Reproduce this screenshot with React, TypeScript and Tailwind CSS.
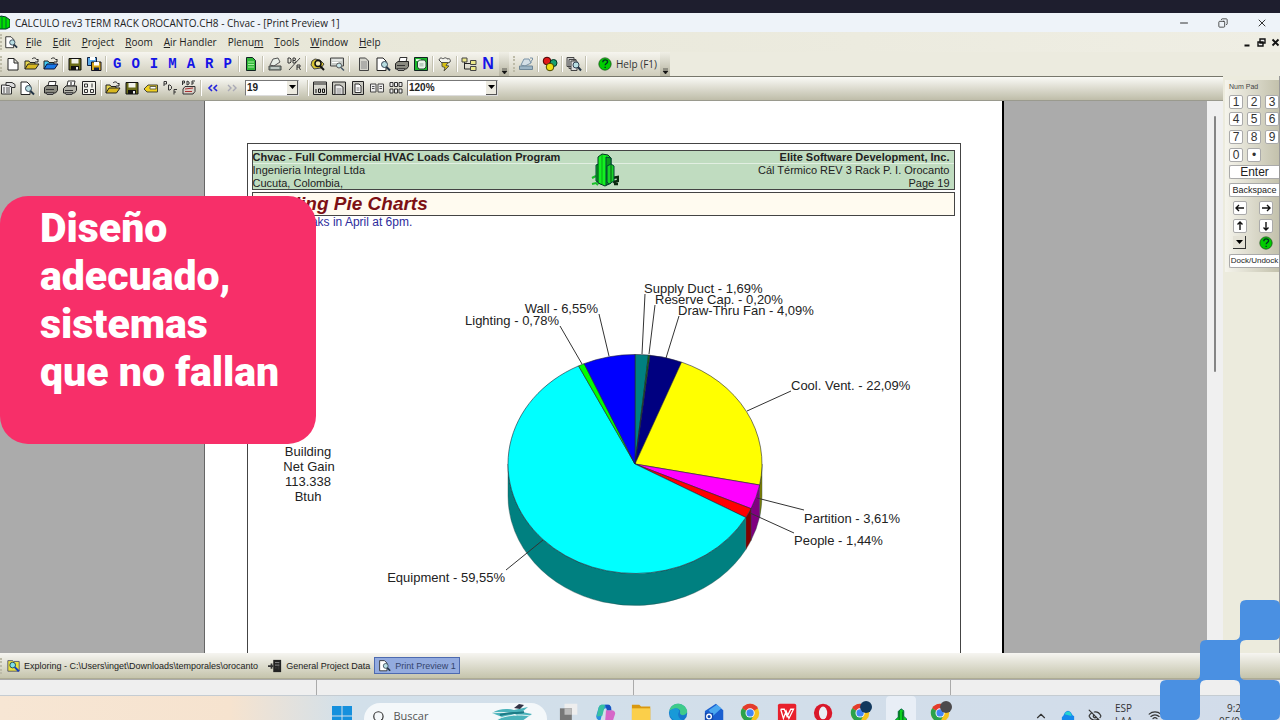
import type { ReactNode } from 'react';
import { Search, ChevronUp, Wifi, EyeOff, Minus, X, Copy } from 'lucide-react';

type IconProps = { children: ReactNode; size?: string; box?: string };

function Icon({ children, size = 'w-4 h-4', box = '0 0 16 16' }: IconProps) {
  return (
    <svg viewBox={box} className={`${size} shrink-0`} aria-hidden="true">
      {children}
    </svg>
  );
}

const ink = '#222';

const icons: Record<string, ReactNode> = {
  new: <path d="M3 2.5h6l4 4V14H3zM9 2.5V7h4" fill="#fff" stroke={ink} />,
  open: (
    <>
      <path d="M1 13V5h4l1 1.500h5V9" fill="#e8d850" stroke={ink} />
      <path d="M1 13l3-5h11l-3.500 5z" fill="#d8b820" stroke={ink} />
      <path d="M8 3c2-2 4-1 5 1l1-1v3h-3" fill="none" stroke={ink} />
    </>
  ),
  openBlue: (
    <>
      <path d="M1 13V5h4l1 1.500h5V9" fill="#40c8f0" stroke={ink} />
      <path d="M1 13l3-5h11l-3.500 5z" fill="#1878e8" stroke="#113" />
      <path d="M8 3c2-2 4-1 5 1l1-1v3h-3" fill="none" stroke={ink} />
    </>
  ),
  save: (
    <>
      <path d="M2 2.500h12V14H2z" fill="#6b6c18" stroke="#111" />
      <path d="M4.500 3h7v4.500h-7z" fill="#f2f2ea" />
      <path d="M4 10h8v4H4z" fill="#111" />
      <path d="M9 11h2v2.500H9z" fill="#eee" />
    </>
  ),
  saveAll: (
    <>
      <path d="M1.500 1.500h9v8h-9z" fill="#59a8e8" stroke="#124" />
      <path d="M4 1h5v3H4z" fill="#fff" />
      <path d="M5.500 6h9.500v8.500H5.500z" fill="#d8a818" stroke="#112" />
      <path d="M8 6h5v3.500H8z" fill="#fff" />
      <path d="M8 11.500h5V14H8z" fill="#124" />
    </>
  ),
  greenDoc: (
    <>
      <path d="M3.500 1.500h6l3 3V14.500h-9z" fill="#30b838" stroke="#122" />
      <path d="M5 6h6M5 8.500h6M5 11h6" stroke="#a8f0a0" />
    </>
  ),
  scale: (
    <>
      <path d="M3 9l3-6 5-1 2 4-6 4z" fill="#e8efe8" stroke="#555" />
      <path d="M2 10h12v4H2z" fill="#8fa39a" stroke="#444" />
      <path d="M4 12h8" stroke="#eee" />
    </>
  ),
  dbr: (
    <>
      <path d="M3 14L14 2" stroke="#444" />
      <path d="M2 2v5M2 2h2l1 1v3l-1 1H2M7 2v5M7 2h2l.5 1L9 4.500H7M9 4.500l1 1V6L9 7H7" fill="none" stroke="#333" />
      <path d="M11 9v5M11 9h3v2h-3M13 11l1.500 3" fill="none" stroke="#333" />
    </>
  ),
  find: (
    <>
      <path d="M2 5l3-2 5 1 4 4-3 4-7 1-3-4z" fill="#d8c430" stroke="#444" />
      <circle cx="8" cy="7.500" r="3" fill="#f4ecb0" stroke="#111" strokeWidth="1.500" />
      <path d="M10 10l4 4" stroke="#111" strokeWidth="2" />
    </>
  ),
  screen: (
    <>
      <path d="M1.500 2h13v8h-13z" fill="#c8ccc8" stroke="#444" />
      <path d="M3 4h10M3 6.500h7" stroke="#fff" />
      <circle cx="10" cy="9.500" r="2.500" fill="#c7e6ea" stroke="#555" />
      <path d="M12 11.500l3 3" stroke="#456" strokeWidth="1.500" />
    </>
  ),
  doc: (
    <>
      <path d="M3.500 2h6l3 3v9.500h-9z" fill="#d4d4cc" stroke="#444" />
      <path d="M5 6h6M5 8h6M5 10h6M5 12h6" stroke="#888" />
    </>
  ),
  preview: (
    <>
      <path d="M2 2h6l3 3v9.500H2z" fill="#fff" stroke={ink} />
      <circle cx="9.500" cy="8.500" r="3" fill="#b8dee2" stroke="#345" />
      <path d="M11.500 11l3.500 3.500" stroke="#234" strokeWidth="2" />
    </>
  ),
  previews: (
    <>
      <path d="M1 1.500h7v9H1zM3 3.500h7v9H3z" fill="#ccc" stroke="#444" />
      <path d="M5 5h6v9.500H5z" fill="#ddd" stroke="#444" />
      <circle cx="10" cy="9" r="3" fill="#b8dee2" stroke="#345" />
      <path d="M12 11l3 3.500" stroke="#234" strokeWidth="2" />
    </>
  ),
  print: (
    <>
      <path d="M5 6l1-4.500h7L12 6z" fill="#fff" stroke="#333" />
      <path d="M1.500 7.500L4 5.500h10.500v5l-2 2.500h-11z" fill="#8a8a80" stroke={ink} />
      <path d="M3 9.500h8M3 13h8l-1 1.500H4z" fill="#eee" stroke="#333" />
    </>
  ),
  printOne: (
    <>
      <path d="M5 6l1-5h7l-1 5z" fill="#fff" stroke="#333" />
      <path d="M9 2v3" stroke="#111" />
      <path d="M1.500 8.500L4 6h10.500v4.500l-2 2.500h-11z" fill="#b4b4aa" stroke={ink} />
      <path d="M3 10.500h8M3 13h8l-1 1.500H4z" fill="#eee" stroke="#333" />
    </>
  ),
  pages: (
    <>
      <path d="M1.500 1.500h13v13h-13z" fill="#f2f2ec" stroke="#222" />
      <path d="M3.500 4h3v3h-3zM3.500 9.500h3v3h-3z" fill="none" stroke="#333" />
      <path d="M11 3.500v4M9.500 9.500h3v3h-3z" fill="none" stroke="#333" />
    </>
  ),
  greenFrame: (
    <>
      <path d="M1.500 1.500h13v13h-13z" fill="#18b828" stroke="#122" />
      <path d="M3 3h5v2H3z" fill="#d8f8d8" />
      <path d="M4.500 6l2-2h5l1.500 2v5l-2 2H6l-1.500-2z" fill="#e8f4e8" stroke="#243" />
      <path d="M6.500 7h4v3.500h-4z" fill="#b8ccc0" />
    </>
  ),
  funnel: (
    <>
      <path d="M2 4c1-3 3-2 4-1 2-2 4-1 4 0 3-1 4 1 3 3l-4 2H6z" fill="#f4f4ee" stroke="#444" />
      <path d="M5 6.500h6l-2 3 3 .5-5 5 1-3.500-3-1z" fill="#d8c010" stroke="#554" />
    </>
  ),
  tree: (
    <>
      <path d="M3.500 5v8h6M3.500 7.500h6" fill="none" stroke="#222" />
      <path d="M1 2h5v4H1zM9.500 4.500H15v4H9.500zM9.500 10.500H15v4H9.500z" fill="#ece88a" stroke="#444" />
    </>
  ),
  paleScale: (
    <>
      <path d="M3 9l3-6h5l2 4-6 3z" fill="#d4dfe6" stroke="#7a93a6" />
      <path d="M1.500 10h13v3.500h-13z" fill="#9cb4c4" stroke="#6f8798" />
      <path d="M12 2h2.500v2L13 5v2" fill="none" stroke="#7a93a6" />
    </>
  ),
  balls: (
    <>
      <circle cx="5" cy="5" r="3.800" fill="#e01818" stroke="#400" />
      <circle cx="11.500" cy="7" r="3.500" fill="#18a070" stroke="#032" />
      <circle cx="8" cy="11" r="3.800" fill="#f0e010" stroke="#440" />
    </>
  ),
  form: (
    <>
      <path d="M1.500 5h10v9h-10z" fill="#eee" stroke="#333" />
      <path d="M3 8h2M6 8h4M3 10h2M6 10h4M3 12h2M6 12h4" stroke="#555" />
      <path d="M6 2.500h6l3 2v3h-3l-3-2H6z" fill="#ddd" stroke="#333" />
    </>
  ),
  label: (
    <>
      <path d="M1 9l4-4h9.500v7H4z" fill="#f0d020" stroke="#443" />
      <path d="M7 6.500h6V9H7z" fill="#fff" stroke="#664" />
    </>
  ),
  pdf: (
    <path d="M2 6V1.500h2.500V4H2M6.500 10V5h1.500l1.500 1.500v2L8 10zM12 14.500V9.500h3M12 12h2" fill="none" stroke="#333" />
  ),
  pdfPrint: (
    <>
      <path d="M1.500 5V1h2v2h-2M6 1v4l2-1V2zM11 5V1h3M11 3h2" fill="none" stroke="#333" />
      <path d="M2 9l2-2.500h10v5L12 14H2z" fill="#d8d0c8" stroke="#333" />
      <path d="M4 9l8-1M4 11.500h7" stroke="#a33" />
    </>
  ),
  zoom100: (
    <>
      <path d="M1.500 2h13v12.500h-13z" fill="#d8d8d0" stroke="#222" />
      <path d="M2 4h12" stroke="#222" />
      <path d="M4 9v4M6.500 9h2v3.500h-2zM10.500 9h2v3.500h-2z" fill="none" stroke="#111" />
    </>
  ),
  zoomWidth: (
    <>
      <path d="M1.500 2h13v12.500h-13z" fill="#c8c8c0" stroke="#222" />
      <path d="M4 5h5l3 2v7.500H4z" fill="#eee" stroke="#333" />
      <path d="M5.500 9h5M5.500 11h5M5.500 13h5" stroke="#888" />
    </>
  ),
  zoomPage: (
    <>
      <path d="M2.500 1.500h11v13h-11z" fill="#c8c8c0" stroke="#222" />
      <path d="M5 4h4l2 2v6.500H5z" fill="#fff" stroke="#333" />
      <path d="M6.500 8h3M6.500 10h3" stroke="#777" />
    </>
  ),
  twoPages: (
    <>
      <path d="M1.500 4h5.500v8H1.500zM9 4h5.500v8H9z" fill="#eee" stroke="#444" />
      <path d="M3 6.500h2.500M3 8.500h2.500M10.500 6.500H13M10.500 8.500H13" stroke="#555" />
    </>
  ),
  sixPages: (
    <path d="M2 2.500h3v4H2zM6.500 2.500h3v4h-3zM11 2.500h3v4h-3zM2 9h3v4H2zM6.500 9h3v4h-3zM11 9h3v4h-3z" fill="#eee" stroke="#333" />
  ),
};

function Building({ size }: { size: string }) {
  return (
    <Icon size={size} box="0 0 28 34">
      <path d="M1 25l4-2M1 31l4-1 2 2" stroke="#18c028" strokeWidth="2" fill="none" />
      <path d="M21 25l6-1v4l-5 1M23 31h4" stroke="#0c2a10" strokeWidth="2.500" fill="none" />
      <path d="M5 12l5-2v21l-5-3z" fill="#10b820" stroke="#043" />
      <path d="M7 4l4-3 6 1 3 3v25l-6 3-7-3z" fill="#12f020" stroke="#032" />
      <path d="M15 4l5 1v25l-5 2z" fill="#0a9a1c" stroke="#043" />
      <path d="M11 2v29" stroke="#0aa018" />
      <path d="M16 13l4-2 3 2v15l-5 3-2-2z" fill="#18d428" stroke="#043" />
      <path d="M20 12v17" stroke="#065a14" />
    </Icon>
  );
}

function ToolButton({ name, label }: { name: string; label: string }) {
  return (
    <button aria-label={label} className="shrink-0">
      <Icon>{icons[name]}</Icon>
    </button>
  );
}

function Sep() {
  return <span className="h-4 w-[2px] shrink-0 border-l border-[#c4c2b2] bg-white" />;
}

function Grip() {
  return <span className="h-4 w-[2px] shrink-0 border-l-2 border-dotted border-[#bdbba8]" />;
}

function More() {
  return (
    <button aria-label="More buttons" className="flex h-6 w-[10px] shrink-0 items-end justify-center bg-gradient-to-b from-[#f0efe6] to-[#b5b3a0] pb-px">
      <Icon size="w-[7px] h-[7px]" box="0 0 7 7">
        <path d="M1 1h5M1 3h5L3.500 6z" fill="#111" stroke="#111" strokeWidth=".6" />
      </Icon>
    </button>
  );
}

function HelpBall({ size }: { size: string }) {
  return (
    <Icon size={size}>
      <circle cx="8" cy="8" r="7" fill="#0c0" stroke="#175c17" />
      <path d="M5.500 6c0-3.500 5.500-3.500 5.500-.5 0 2-2.800 2-2.800 4M8.200 11v1.600" fill="none" stroke="#032" strokeWidth="1.500" />
    </Icon>
  );
}

const menus: [string, string, string][] = [
  ['', 'F', 'ile'],
  ['', 'E', 'dit'],
  ['', 'P', 'roject'],
  ['', 'R', 'oom'],
  ['', 'A', 'ir Handler'],
  ['Plenu', 'm', ''],
  ['', 'T', 'ools'],
  ['', 'W', 'indow'],
  ['', 'H', 'elp'],
];

function TitleBar() {
  return (
    <header className="flex h-[19px] shrink-0 items-center bg-[#eef3f9] pr-3">
      <Icon size="w-[10px] h-[15px]" box="0 0 10 15">
        <path d="M-4 4l5-3 5 1 4 3v7l-4 2H-4z" fill="#0d0" stroke="#032" />
        <path d="M2 1v13M6 3v11" stroke="#063" />
      </Icon>
      <h1 className="ml-[5px] flex-1 text-[10px] leading-4 text-[#222]">
        CALCULO rev3 TERM RACK OROCANTO.CH8 - Chvac - [Print Preview 1]
      </h1>
      <div className="flex items-center gap-7 text-[#333]">
        <button aria-label="Minimize"><Minus className="h-3 w-3" strokeWidth={2} /></button>
        <button aria-label="Restore"><Copy className="h-[10px] w-[10px] -scale-x-100" strokeWidth={2} /></button>
        <button aria-label="Close"><X className="h-3 w-3" strokeWidth={2} /></button>
      </div>
    </header>
  );
}

function MenuBar() {
  return (
    <nav className="flex h-5 shrink-0 items-center bg-gradient-to-r from-[#e6e5d5] to-[#efeee4] text-[10px] leading-4 text-[#222]">
      <Grip />
      <span className="ml-[2px] mr-2"><Icon size="w-[14px] h-[14px]">{icons.preview}</Icon></span>
      <div className="flex flex-1 gap-[11px]">
        {menus.map(([before, key, after]) => (
          <button key={key + after} className="whitespace-nowrap">
            {before}
            <u>{key}</u>
            {after}
          </button>
        ))}
      </div>
      <div className="flex gap-[5px] text-black">
        <button aria-label="Minimize document">
          <Icon size="w-[9px] h-[9px]" box="0 0 9 9"><path d="M1.500 7.500h5" stroke="#111" strokeWidth="2" /></Icon>
        </button>
        <button aria-label="Restore document">
          <Icon size="w-[9px] h-[9px]" box="0 0 9 9"><path d="M3 1h5v4H3zM1 4h5v4H1z" fill="#eee" stroke="#111" strokeWidth="1.400" /></Icon>
        </button>
        <button aria-label="Close document">
          <Icon size="w-[9px] h-[9px]" box="0 0 9 9"><path d="M1.500 1.500l6 6M7.500 1.500l-6 6" stroke="#111" strokeWidth="1.800" /></Icon>
        </button>
      </div>
    </nav>
  );
}

function MainToolbar() {
  return (
    <div className="flex h-6 shrink-0 items-center bg-[#ecebdf]">
      <div className="flex h-6 items-center gap-[3px] rounded-r bg-gradient-to-b from-[#f6f5ef] to-[#cfcdbb]">
        <Grip />
        <ToolButton name="new" label="New" />
        <ToolButton name="open" label="Open" />
        <ToolButton name="openBlue" label="Open example" />
        <Sep />
        <ToolButton name="save" label="Save" />
        <ToolButton name="saveAll" label="Save all" />
        <Sep />
        <div className="flex w-[125px] justify-between px-[3px] font-['Liberation_Mono',monospace] text-sm font-bold leading-4 text-[#1414e6]">
          {['G', 'O', 'I', 'M', 'A', 'R', 'P'].map((letter) => (
            <button key={letter}>{letter}</button>
          ))}
        </div>
        <Sep />
        <ToolButton name="greenDoc" label="Report" />
        <Sep />
        <ToolButton name="scale" label="Calculate" />
        <ToolButton name="dbr" label="Duct" />
        <Sep />
        <ToolButton name="find" label="Find" />
        <ToolButton name="screen" label="Screen view" />
        <Sep />
        <span />
        <ToolButton name="doc" label="Page" />
        <ToolButton name="preview" label="Preview" />
        <ToolButton name="print" label="Print" />
        <ToolButton name="greenFrame" label="Drawing" />
        <Sep />
        <ToolButton name="funnel" label="Filter" />
        <Sep />
        <ToolButton name="tree" label="Tree" />
        <button className="w-4 font-['Liberation_Sans',sans-serif] text-base font-bold leading-4 text-[#1414e6]">N</button>
        <More />
      </div>
      <div className="flex h-6 items-center gap-[3px] rounded-r bg-gradient-to-b from-[#f6f5ef] to-[#cfcdbb] pl-1">
        <Grip />
        <ToolButton name="paleScale" label="Calculator" />
        <Sep />
        <ToolButton name="balls" label="Colors" />
        <Sep />
        <ToolButton name="previews" label="Preview all" />
        <Sep />
        <button className="ml-2 flex items-center gap-1 text-[10px] leading-4 text-[#333]">
          <HelpBall size="w-[14px] h-[14px]" />
          Help (F1)
        </button>
        <More />
      </div>
    </div>
  );
}

function Combo({ label, value, width }: { label: string; value: string; width: string }) {
  return (
    <div className={`relative h-4 shrink-0 border border-t-[#777] border-l-[#777] border-r-[#ddd] border-b-[#ddd] bg-white ${width}`}>
      <select
        aria-label={label}
        defaultValue={value}
        className="block h-full w-full appearance-none bg-white px-px text-[10px] font-bold leading-[14px] text-[#222]"
      >
        <option>{value}</option>
      </select>
      <span className="pointer-events-none absolute right-0 top-0 flex h-full w-[11px] items-center justify-center border-b border-r border-[#555] bg-[#eceae0]">
        <Icon size="w-[7px] h-1" box="0 0 7 4"><path d="M0 0h7L3.500 4z" fill="#000" /></Icon>
      </span>
    </div>
  );
}

function PreviewToolbar() {
  return (
    <div className="flex h-[25px] shrink-0 items-center gap-[3px] border-y border-t-[#77776c] border-b-[#9a9a8e] bg-gradient-to-b from-[#fafaf6] to-[#bfbda9] pb-[2px] font-['Liberation_Sans',sans-serif]">
      <ToolButton name="form" label="Setup" />
      <ToolButton name="preview" label="Preview page" />
      <Sep />
      <ToolButton name="print" label="Print all" />
      <ToolButton name="printOne" label="Print page" />
      <ToolButton name="pages" label="Select pages" />
      <Sep />
      <ToolButton name="open" label="Open report" />
      <ToolButton name="save" label="Save report" />
      <ToolButton name="label" label="Label" />
      <ToolButton name="pdf" label="Export PDF" />
      <ToolButton name="pdfPrint" label="Print PDF" />
      <Sep />
      <button aria-label="Previous page" className="ml-[2px]">
        <Icon size="w-3 h-4" box="0 0 12 16"><path d="M5 5L2 8l3 3M10 5L7 8l3 3" fill="none" stroke="#2222dd" strokeWidth="1.600" /></Icon>
      </button>
      <button aria-label="Next page" className="ml-1">
        <Icon size="w-3 h-4" box="0 0 12 16"><path d="M2 5l3 3-3 3M7 5l3 3-3 3" fill="none" stroke="#a9a9b5" strokeWidth="1.400" /></Icon>
      </button>
      <span className="w-px" />
      <Combo label="Page number" value="19" width="w-[54px]" />
      <span className="w-[2px]" />
      <Sep />
      <ToolButton name="zoom100" label="Actual size" />
      <ToolButton name="zoomWidth" label="Fit width" />
      <ToolButton name="zoomPage" label="Fit page" />
      <ToolButton name="twoPages" label="Two pages" />
      <ToolButton name="sixPages" label="Six pages" />
      <Combo label="Zoom" value="120%" width="w-[91px]" />
    </div>
  );
}

// Pie geometry, in page units
const cx = 635;
const cy = 464;
const rx = 127;
const ry = 109.5;
const depth = 32;

type Slice = {
  name: string;
  value: number;
  text: string;
  fill: string;
  side: string;
  at: [number, number];
  anchor: 'start' | 'end';
  line: [number, number, number, number];
};

const slices: Slice[] = [
  { name: 'Supply Duct', value: 1.69, text: '1,69%', fill: '#008080', side: '#004040', at: [644, 293], anchor: 'start', line: [645, 294, 642, 354] },
  { name: 'Reserve Cap.', value: 0.2, text: '0,20%', fill: '#008000', side: '#004000', at: [655, 304], anchor: 'start', line: [655, 305, 649, 354] },
  { name: 'Draw-Thru Fan', value: 4.09, text: '4,09%', fill: '#000080', side: '#000040', at: [678, 315], anchor: 'start', line: [679, 316, 666, 358] },
  { name: 'Cool. Vent.', value: 22.09, text: '22,09%', fill: '#ffff00', side: '#808000', at: [791, 390], anchor: 'start', line: [791, 391, 747, 411] },
  { name: 'Partition', value: 3.61, text: '3,61%', fill: '#ff00ff', side: '#800080', at: [804, 523], anchor: 'start', line: [804, 510, 757, 498] },
  { name: 'People', value: 1.44, text: '1,44%', fill: '#ff0000', side: '#800000', at: [794, 545], anchor: 'start', line: [794, 533, 750, 513] },
  { name: 'Equipment', value: 59.55, text: '59,55%', fill: '#00ffff', side: '#008080', at: [505, 582], anchor: 'end', line: [506, 570, 543, 540] },
  { name: 'Lighting', value: 0.78, text: '0,78%', fill: '#00ff00', side: '#008000', at: [559, 325], anchor: 'end', line: [560, 326, 582, 364] },
  { name: 'Wall', value: 6.55, text: '6,55%', fill: '#0000ff', side: '#000080', at: [598, 313], anchor: 'end', line: [599, 314, 609, 356] },
];

function rim(percent: number): [number, number] {
  const a = (percent / 100) * Math.PI * 2;
  return [cx + rx * Math.sin(a), cy - ry * Math.cos(a)];
}

function PieChart() {
  let total = 0;
  const parts = slices.map((s) => {
    const from = total;
    total += s.value;
    return { ...s, from, to: total };
  });

  return (
    <svg viewBox="252 232 703 430" className="block h-[430px] w-[703px] font-['Liberation_Sans',sans-serif] text-[13px]" role="img" aria-label="Building pie chart">
      {parts.map((p) => {
        // only the front half of the rim shows its side
        const from = Math.max(p.from, 25);
        const to = Math.min(p.to, 75);
        if (from >= to) return null;
        const [x1, y1] = rim(from);
        const [x2, y2] = rim(to);
        return (
          <path
            key={p.name}
            d={`M${x1} ${y1}A${rx} ${ry} 0 0 1 ${x2} ${y2}V${y2 + depth}A${rx} ${ry} 0 0 0 ${x1} ${y1 + depth}Z`}
            fill={p.side}
            stroke="#2a4a4a"
            strokeWidth=".4"
          />
        );
      })}
      {parts.map((p) => {
        const [x1, y1] = rim(p.from);
        const [x2, y2] = rim(p.to);
        const large = p.value > 50 ? 1 : 0;
        return (
          <path
            key={p.name}
            d={`M${cx} ${cy}L${x1} ${y1}A${rx} ${ry} 0 ${large} 1 ${x2} ${y2}Z`}
            fill={p.fill}
            stroke="#223"
            strokeWidth=".6"
          />
        );
      })}
      {parts.map((p) => (
        <g key={p.name}>
          <line x1={p.line[0]} y1={p.line[1]} x2={p.line[2]} y2={p.line[3]} stroke="#333" />
          <text x={p.at[0]} y={p.at[1]} textAnchor={p.anchor} fill="#222">
            {p.name} - {p.text}
          </text>
        </g>
      ))}
      <g textAnchor="middle" fill="#222">
        <text x="308" y="456">Building</text>
        <text x="309" y="471">Net Gain</text>
        <text x="308" y="486">113.338</text>
        <text x="308" y="501">Btuh</text>
      </g>
    </svg>
  );
}

function ReportPage() {
  return (
    <article className="w-[800px] shrink-0 border-l border-r-2 border-l-[#666] border-r-black bg-white pl-[42px] pr-[41px] pt-[42px] font-['Liberation_Sans',sans-serif]">
      <div className="h-full border border-b-0 border-[#444] pl-[4px] pr-[5px] pt-[6px]">
        <div className="relative flex h-10 justify-between border border-[#444] bg-[#c0dcc0] text-[11px] leading-[13px] text-[#222]">
          <span className="absolute inset-x-0 top-3 h-px bg-[#e2efe2]" />
          <div className="relative">
            <p className="font-bold">Chvac - Full Commercial HVAC Loads Calculation Program</p>
            <p>Ingenieria Integral Ltda</p>
            <p>Cucuta, Colombia,</p>
          </div>
          <div className="absolute left-[338px] top-[2px]">
            <Building size="w-[28px] h-[34px]" />
          </div>
          <div className="relative pr-1 text-right">
            <p className="font-bold">Elite Software Development, Inc.</p>
            <p>Cál Térmico REV 3 Rack P. I. Orocanto</p>
            <p>Page 19</p>
          </div>
        </div>
        <h2 className="mt-[2px] h-6 border border-[#444] bg-[#fffbf0] text-[19px] font-bold italic leading-[22px] text-[#7c1014]">
          Building Pie Charts
        </h2>
        <p className="text-xs leading-3 text-[#2c2c9c]">Building peaks in April at 6pm.</p>
        <div className="mt-1">
          <PieChart />
        </div>
      </div>
    </article>
  );
}

const padKey = 'flex h-[14px] w-[14px] items-center justify-center rounded-[2px] border border-[#aaa] bg-white text-xs leading-3 text-[#333]';
const wideKey = 'flex h-[14px] w-[50px] items-center justify-center whitespace-nowrap rounded-l-[2px] border border-r-0 border-[#aaa] bg-white leading-3 text-[#222]';

function Arrow({ d, label }: { d: string; label: string }) {
  return (
    <button aria-label={label} className={padKey}>
      <Icon size="w-[10px] h-[10px]" box="0 0 10 10"><path d={d} fill="none" stroke="#111" strokeWidth="1.400" /></Icon>
    </button>
  );
}

function NumPad() {
  return (
    <aside className="w-[57px] shrink-0 border-r border-[#999] bg-[#ecebdd] pl-[2px] pt-1 font-['Liberation_Sans',sans-serif]">
      <div className="flex h-[192px] flex-col justify-between bg-gradient-to-r from-[#f5f4ec] to-[#c3c1ac] pb-1 pl-1">
        <p className="pt-[3px] text-[7px] leading-2 text-[#444]">Num Pad</p>
        {['123', '456', '789'].map((row) => (
          <div key={row} className="flex gap-1 overflow-hidden">
            {row.split('').map((n) => (
              <button key={n} className={`${padKey} shrink-0`}>{n}</button>
            ))}
          </div>
        ))}
        <div className="flex gap-1">
          <button className={padKey}>0</button>
          <button className={padKey}>•</button>
        </div>
        <button className={`${wideKey} text-xs`}>Enter</button>
        <button className={`${wideKey} text-[9px]`}>Backspace</button>
        <div className="flex justify-between pl-1 pr-[6px]">
          <Arrow label="Left" d="M1 5h8M4 2L1 5l3 3" />
          <Arrow label="Right" d="M1 5h8M6 2l3 3-3 3" />
        </div>
        <div className="flex justify-between pl-1 pr-[6px]">
          <Arrow label="Up" d="M5 1v8M2.500 3.500L5 1l2.500 2.500" />
          <Arrow label="Down" d="M5 1v8M2.500 6.500L5 9l2.500-2.500" />
        </div>
        <div className="flex justify-between pl-1 pr-[6px]">
          <button aria-label="Options" className="flex h-[13px] w-[13px] items-center justify-center border-b border-r border-[#333] bg-[#e4e2d6]">
            <Icon size="w-[7px] h-1" box="0 0 7 4"><path d="M0 0h7L3.500 4z" fill="#000" /></Icon>
          </button>
          <button aria-label="Help"><HelpBall size="w-[14px] h-[14px]" /></button>
        </div>
        <button className={`${wideKey} text-[8px]`}>Dock/Undock</button>
      </div>
    </aside>
  );
}

function WindowTabs() {
  return (
    <div className="flex h-[26px] shrink-0 items-center border-b border-[#aeac94] bg-gradient-to-b from-[#f6f5f1] to-[#c5c4ac] font-['Liberation_Sans',sans-serif] text-[9px] leading-4 text-[#222]">
      <Grip />
      <button className="ml-[5px] flex items-center gap-1">
        <Icon size="w-[13px] h-[13px]">
          <path d="M1 2h6l1 1h7v12H1z" fill="#e8e040" stroke="#446" />
          <circle cx="7" cy="7.500" r="3.500" fill="#7fe0e8" stroke="#134" />
          <path d="M9.500 10l5 5" stroke="#1440c0" strokeWidth="2.500" />
        </Icon>
        Exploring - C:\Users\inget\Downloads\temporales\orocanto
      </button>
      <button className="ml-[10px] flex items-center gap-1">
        <Icon size="w-[14px] h-[14px]">
          <path d="M6 1h9v14H6z" fill="#222" />
          <path d="M0 8h6M4 5v6M8 4h2M8 7h2M8 10h2M12 4v8" stroke="#333" strokeWidth="2" />
          <path d="M8 4h5M8 7h5" stroke="#888" />
        </Icon>
        General Project Data
      </button>
      <button className="ml-1 flex h-[17px] items-center gap-1 border border-[#4d6ab0] bg-[#93abdf] px-[3px] text-[#33436c]">
        <Icon size="w-[13px] h-[13px]">{icons.preview}</Icon>
        Print Preview 1
      </button>
    </div>
  );
}

function StatusBar() {
  return (
    <footer className="grid h-[17px] shrink-0 grid-cols-4 border-y border-t-[#aaa] border-b-[#c5ccd2] bg-[#efefef] pr-3">
      <span className="border-r border-[#aaa]" />
      <span className="border-r border-[#aaa]" />
      <span className="border-r border-[#aaa]" />
      <span />
    </footer>
  );
}

function Chrome({ badge }: { badge?: string }) {
  return (
    <>
      <circle cx="11" cy="13" r="10" fill="#f6c21c" />
      <path d="M11 13L2.300 8A10 10 0 0119.700 8z" fill="#e33b2e" />
      <path d="M11 13L2.300 8A10 10 0 0011 23l4-8z" fill="#2ba24c" />
      <circle cx="11" cy="13" r="5" fill="#fff" />
      <circle cx="11" cy="13" r="4" fill="#4285f4" />
      {badge && <circle cx="17.500" cy="6.500" r="6.500" fill={badge} />}
    </>
  );
}

const apps: [string, ReactNode][] = [
  ['Task view', <><path d="M6 3h14v12H6z" fill="#eee" /><path d="M1 8h13v13H1z" fill="#777" /><path d="M6 8h8v7H6z" fill="#bbb" /></>],
  ['Copilot', <><path d="M7 4h7q3 0 4 4h-6q-3 0-4 5l-2 8H4q-4-2-2-7l2-7q1-3 3-3z" fill="#2a8fe0" /><path d="M7 4h4l-3 12-6 1 2-10q1-3 3-3z" fill="#38c0a0" /><path d="M12 10h6q4 0 4 4l-3 9h-8z" fill="#d667c8" /><path d="M11 4h4q2 0 3 6h-5z" fill="#1850c0" /></>],
  ['Files', <><path d="M1 4h8l2 2h10v16H1z" fill="#d9980f" /><path d="M1 8h20v14H1z" fill="#fbcf4a" /></>],
  ['Edge', <><circle cx="11" cy="13" r="10" fill="#1678cc" /><path d="M1.500 11C3 1 18 0 21 11c0 5-7 6-8 2 2-5-6-7-11.500-2z" fill="#3ecb8a" /><path d="M2 11c5-5 11-3 10 1-2 2-1 7 4 9-9 4-16-4-14-10z" fill="#189ad8" /></>],
  ['Outlook', <><path d="M1 11L13 3l8 7v12H1z" fill="#1a5fd0" /><path d="M5 10l9-6 5 4-9 8z" fill="#4aa8f0" /><path d="M1 13h9v9H1z" fill="#1148b0" /><circle cx="5.500" cy="17" r="2.500" fill="none" stroke="#fff" strokeWidth="1.500" /></>],
  ['Chrome', <Chrome />],
  ['WPS', <><path d="M1 5q0-2 2-2h16q2 0 2 2v17H1z" fill="#e8202c" /><path d="M4 9h4l3 8 4-8h3l-5 10-3-8-3 8-3-10" fill="none" stroke="#fff" strokeWidth="1.400" /></>],
  ['Opera', <><circle cx="11" cy="13" r="10" fill="#d9182a" /><ellipse cx="11" cy="13" rx="4.500" ry="7" fill="#e9eef4" /></>],
  ['Chrome work', <Chrome badge="#12395e" />],
  ['Chvac', <><path d="M6 14l3-3V5l3-3 3 2v6l3 3v11H6z" fill="#0bd01c" stroke="#064" /><path d="M10 4v20M14 5v19" stroke="#052" /></>],
  ['Chrome personal', <Chrome badge="#4c4a4c" />],
];

function Taskbar() {
  return (
    <div className="grid h-6 shrink-0 grid-cols-[1fr_auto_1fr] overflow-hidden bg-[linear-gradient(90deg,#f7e6d4_0%,#f6e3cf_18%,#d2e0ea_27%,#d2dcea_100%)]">
      <span />
      <div className="flex h-12 gap-3 pl-1">
        <button aria-label="Start" className="self-start pt-[10px]">
          <Icon size="w-5 h-5" box="0 0 20 20">
            <path d="M0 0h9.500v9.500H0zM10.500 0H20v9.500h-9.500zM0 10.500h9.500V20H0zM10.500 10.500H20V20h-9.500z" fill="#1590dd" />
          </Icon>
        </button>
        <label className="mt-[7px] flex h-8 w-[183px] items-start rounded-full bg-[#f4f8fa] pl-2 text-[#555]">
          <Search className="mt-[7px] h-[14px] w-[14px] shrink-0" color="#333" />
          <input aria-label="Buscar" placeholder="Buscar" className="ml-2 mt-[5px] w-24 bg-transparent text-[11px] leading-4 outline-none placeholder:text-[#555]" />
          <Icon size="w-11 h-6" box="0 0 44 24">
            <path d="M2 10c6-4 14-5 22-3l14-3-6 5 10 2-10 7H6l6-4z" fill="#4bb3bb" />
            <path d="M2 10c8-1 16-1 24 2M8 16c8-4 22-5 32-3" stroke="#e8f4f4" fill="none" />
            <path d="M24 5l5-4 5 1-4 4z" fill="#334" />
            <path d="M10 12c8-3 16-1 24-3" stroke="#1c7b86" strokeWidth="2" fill="none" />
          </Icon>
        </label>
        <div className="flex w-[394px] items-start justify-between">
          {apps.map(([name, drawing]) => (
            <button
              key={name}
              aria-label={name}
              className={name === 'Chvac' ? 'h-10 rounded bg-[#e8eef6] px-1 pt-1' : 'pt-1'}
            >
              <Icon size="w-[22px] h-6" box="0 0 24 24">{drawing}</Icon>
            </button>
          ))}
        </div>
      </div>
      <div className="flex h-12 items-start justify-end gap-[13px] pr-2 pt-[13px] text-[10px] leading-3 text-[#333]">
        <button aria-label="Hidden icons"><ChevronUp className="h-[14px] w-[14px]" /></button>
        <button aria-label="Cloud">
          <Icon size="w-[14px] h-[14px]"><path d="M1 14V9c3-1 2-6 7-7 5 1 4 6 7 6v6z" fill="#1688ec" /><path d="M4 6c2-5 8-4 8 2z" fill="#27d3d0" /></Icon>
        </button>
        <button aria-label="Privacy"><EyeOff className="h-[14px] w-[14px]" /></button>
        <p className="-mt-[7px] w-5 leading-[13px]">ESP LAA</p>
        <button aria-label="Network"><Wifi className="h-[14px] w-[14px]" /></button>
        <span className="w-[26px]" />
        <p className="-mt-[7px] w-[58px] text-right leading-[13px]">9:27 a. m. 05/04/2025</p>
      </div>
    </div>
  );
}

export default function App() {
  return (
    <div className="relative flex h-screen flex-col overflow-hidden bg-[#ecebdf] font-['Open_Sans','Noto_Sans',sans-serif]">
      <div className="h-[13px] shrink-0 bg-[#1e1e2e]" />
      <TitleBar />
      <MenuBar />
      <MainToolbar />
      <main className="flex min-h-0 flex-1">
        <div className="flex min-w-0 flex-1 flex-col">
          <PreviewToolbar />
          <div className="flex min-h-0 flex-1">
            <div className="flex min-w-0 flex-1 justify-center overflow-hidden bg-[#ababab]">
              <ReportPage />
            </div>
            <div className="flex w-4 shrink-0 justify-center bg-[#f0f0f0] pt-[15px]">
              <span className="h-64 w-[2px] rounded bg-[#858585]" />
            </div>
          </div>
        </div>
        <NumPad />
      </main>
      <WindowTabs />
      <StatusBar />
      <Taskbar />

      <section className="absolute left-0 top-[196px] h-[248px] w-[316px] rounded-[28px] bg-[#f72f69] pl-10 pt-2">
        <p className="whitespace-nowrap font-['Roboto',sans-serif] text-[41px] font-black leading-[48px] text-white">
          Diseño
          <br />
          adecuado,
          <br />
          sistemas
          <br />
          que no fallan
        </p>
      </section>

      <svg viewBox="0 0 120 120" className="absolute bottom-0 right-0 h-[120px] w-[120px]" aria-hidden="true">
        <path
          d="M86 0H114Q120 0 120 6V34Q120 40 114 40H86Q80 40 80 46V74Q80 80 86 80H114Q120 80 120 86V114Q120 120 114 120H86Q80 120 80 114V86Q80 80 74 80H46Q40 80 40 86V114Q40 120 34 120H6Q0 120 0 114V86Q0 80 6 80H34Q40 80 40 74V46Q40 40 46 40H74Q80 40 80 34V6Q80 0 86 0Z"
          fill="#4a90e2"
        />
      </svg>
    </div>
  );
}
